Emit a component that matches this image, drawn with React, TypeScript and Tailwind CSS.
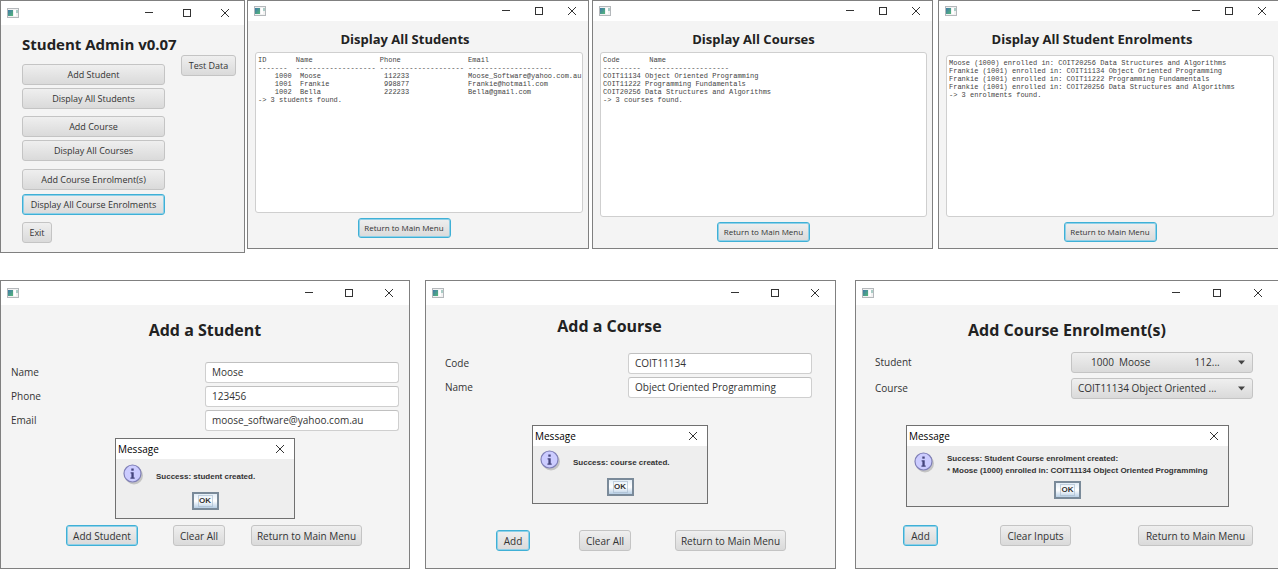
import type { ReactNode } from "react";

const uiFont = "font-['Open_Sans','Noto_Sans',sans-serif]";
const buttonBase =
  "shrink-0 rounded-[3px] border bg-linear-to-b from-[#efefef] to-[#dadada] text-center whitespace-nowrap text-[#333]";
const idle = "border-[#c4c4c4]";
const focused = "border-[#3fb0d6] ring-1 ring-inset ring-[#8fd0e8]";

function AppIcon() {
  return (
    <svg width="12" height="10" viewBox="0 0 12 10" aria-hidden="true">
      <defs>
        <linearGradient id="pane" x1="0" y1="0" x2="1" y2="1">
          <stop offset="0" stopColor="#3f78a8" />
          <stop offset="1" stopColor="#55b878" />
        </linearGradient>
      </defs>
      <rect x="0.5" y="0.5" width="11" height="9" fill="#f2f2f2" stroke="#b4b8bb" />
      <rect x="1" y="2" width="5" height="6" fill="url(#pane)" />
      <rect x="7" y="2" width="2" height="6" fill="#fff" />
      <path d="M10 2v3" stroke="#62a79a" />
    </svg>
  );
}

function CloseGlyph() {
  return (
    <svg width="10" height="10" viewBox="0 0 10 10" fill="none" stroke="#333" aria-hidden="true">
      <path d="M1 1l8 8M9 1l-8 8" />
    </svg>
  );
}

function TitleBar({ bar, control }: { bar: string; control: string }) {
  const item = `flex h-full items-center justify-center ${control}`;
  return (
    <header className={`flex items-center bg-white pl-1.5 ${bar}`}>
      <AppIcon />
      <div className="ml-auto flex h-full">
        <button className={item} aria-label="Minimize">
          <svg width="10" height="10" fill="none" stroke="#333" aria-hidden="true">
            <path d="M1 4.5h8" />
          </svg>
        </button>
        <button className={item} aria-label="Maximize">
          <svg width="10" height="10" fill="none" stroke="#333" aria-hidden="true">
            <rect x="1.5" y="1.5" width="7" height="7" />
          </svg>
        </button>
        <button className={item} aria-label="Close">
          <CloseGlyph />
        </button>
      </div>
    </header>
  );
}

type WindowProps = { frame: string; bar: string; control: string; children: ReactNode };

function AppWindow({ frame, bar, control, children }: WindowProps) {
  return (
    <section className={`relative flex min-w-0 basis-0 flex-col border border-[#808080] bg-[#f4f4f4] ${frame}`}>
      <TitleBar bar={bar} control={control} />
      {children}
    </section>
  );
}

function MenuButton({ label, space = "", active = false }: { label: string; space?: string; active?: boolean }) {
  return (
    <button className={`${buttonBase} h-[21px] w-full text-[9px] leading-4 ${active ? focused : idle} ${space}`}>
      {label}
    </button>
  );
}

type ReportProps = {
  frame: string;
  title: string;
  titleClass: string;
  text: string;
  bodyClass: string;
  areaClass: string;
  footerClass: string;
};

function ReportWindow({ frame, title, titleClass, text, bodyClass, areaClass, footerClass }: ReportProps) {
  return (
    <AppWindow frame={`min-h-[249px] ${frame}`} bar="h-5" control="w-[33px]">
      <div className={`flex flex-1 flex-col pt-2 pl-[7px] ${bodyClass}`}>
        <h2 className={`text-center text-[13px] leading-5 font-bold text-[#222] ${titleClass}`}>{title}</h2>
        <textarea
          readOnly
          wrap="off"
          aria-label={title}
          value={text}
          className={`block w-full resize-none overflow-hidden rounded-[3px] border border-[#cfcfcf] bg-white pt-[3px] pl-0.5 font-['Liberation_Mono',monospace] text-[7px] leading-[8px] text-[#444] outline-none ${areaClass}`}
        />
        <div className={`mt-[5px] flex justify-center ${footerClass}`}>
          <button className={`${buttonBase} ${focused} h-5 w-[93px] text-[8px] leading-4`}>Return to Main Menu</button>
        </div>
      </div>
    </AppWindow>
  );
}

function Field({ id, label, value, width }: { id: string; label: string; value: string; width: string }) {
  return (
    <div className="flex items-center justify-between">
      <label htmlFor={id}>{label}</label>
      <input
        id={id}
        defaultValue={value}
        className={`h-[21px] rounded-[3px] border border-[#cfcfcf] border-t-[#c0c0c0] bg-white px-1.5 pb-0.5 outline-none ${width}`}
      />
    </div>
  );
}

function Choice({ id, label, value }: { id: string; label: string; value: string }) {
  return (
    <div className="flex items-center justify-between">
      <label htmlFor={id}>{label}</label>
      <div className="relative">
        <select
          id={id}
          className="block h-[21px] w-[182px] appearance-none rounded-[3px] border border-[#c4c4c4] bg-linear-to-b from-[#efefef] to-[#dadada] pl-1.5 outline-none"
        >
          <option>{value}</option>
        </select>
        <svg
          className="pointer-events-none absolute top-2 right-2"
          width="7"
          height="5"
          viewBox="0 0 7 5"
          fill="#444"
          aria-hidden="true"
        >
          <path d="M0 0.5h7L3.5 4.5z" />
        </svg>
      </div>
    </div>
  );
}

function ActionButton({ label, size, active = false }: { label: string; size: string; active?: boolean }) {
  return (
    <button className={`${buttonBase} h-[21px] leading-4 ${active ? focused : idle} ${size}`}>
      {label}
    </button>
  );
}

function InfoIcon() {
  return (
    <svg width="21" height="21" viewBox="0 0 21 21" aria-hidden="true">
      <circle cx="11" cy="11.5" r="9" fill="#c4c4c4" />
      <circle cx="9.5" cy="9.5" r="8.5" fill="#ccccff" stroke="#7f7fb6" strokeWidth="1.2" />
      <path d="M8.3 4.5h2.4v2.2H8.3z" fill="#45457c" />
      <path d="M7.6 8.2h3.1v5.3h1v1.2H7.4v-1.2h1V9.4h-.8z" fill="#45457c" />
    </svg>
  );
}

type DialogProps = { place: string; lines: string[]; pad: string; okSpace: string };

function MessageDialog({ place, lines, pad, okSpace }: DialogProps) {
  return (
    <div role="dialog" aria-label="Message" className={`absolute border border-[#707070] bg-[#eee] ${place}`}>
      <header className="flex h-5 items-center justify-between bg-white pr-[7px] pl-0.5 text-black">
        <span>Message</span>
        <button aria-label="Close" className="p-0.5">
          <CloseGlyph />
        </button>
      </header>
      <div className={`flex items-start gap-3 pl-[7px] ${pad}`}>
        <InfoIcon />
        <div className="flex h-[25px] flex-col justify-center font-['Liberation_Sans',Arial,sans-serif] text-[8px] leading-3 font-bold whitespace-nowrap text-[#333]">
          {lines.map((line) => (
            <p key={line}>{line}</p>
          ))}
        </div>
      </div>
      <div className={`flex justify-center ${okSpace}`}>
        <button className="h-[18px] w-[27px] border-2 border-[#7a8a99] bg-linear-to-b from-[#e4eef7] via-white to-[#b8cfe5] px-1 font-['Liberation_Sans',Arial,sans-serif] text-[8px] font-bold text-[#333]">
          <span className="block border border-[#a3b8cc]/60 leading-[10px]">OK</span>
        </button>
      </div>
    </div>
  );
}

const dash = (count: number) => "-".repeat(count);

const studentsText = [
  "ID".padEnd(9) + "Name".padEnd(20) + "Phone".padEnd(21) + "Email",
  `${dash(7)}  ${dash(19)} ${dash(20)} ${dash(20)}`,
  "    1000  " + "Moose".padEnd(20) + "112233".padEnd(20) + "Moose_Software@yahoo.com.au",
  "    1001  " + "Frankie".padEnd(20) + "998877".padEnd(20) + "Frankie@hotmail.com",
  "    1002  " + "Bella".padEnd(20) + "222233".padEnd(20) + "Bella@gmail.com",
  "-> 3 students found.",
].join("\n");

const coursesText = [
  "Code".padEnd(11) + "Name",
  `${dash(9)}  ${dash(19)}`,
  "COIT11134 Object Oriented Programming",
  "COIT11222 Programming Fundamentals",
  "COIT20256 Data Structures and Algorithms",
  "-> 3 courses found.",
].join("\n");

const enrolmentsText = [
  "Moose (1000) enrolled in: COIT20256 Data Structures and Algorithms",
  "Frankie (1001) enrolled in: COIT11134 Object Oriented Programming",
  "Frankie (1001) enrolled in: COIT11222 Programming Fundamentals",
  "Frankie (1001) enrolled in: COIT20256 Data Structures and Algorithms",
  "-> 3 enrolments found.",
].join("\n");

const formTitle = "text-center text-[16px] leading-6 font-bold text-[#222]";

export default function App() {
  return (
    <main className={`min-h-screen bg-white text-[#333] ${uiFont}`}>
      <div className="flex items-start">
        <AppWindow frame="grow-[243] min-h-[253px]" bar="h-6" control="w-[38px]">
          <div className="flex items-start gap-1 pt-[7px] pl-[21px]">
            <div className="w-[155px] shrink-0">
              <h1 className="text-[15px] leading-6 font-bold whitespace-nowrap text-[#222]">Student Admin v0.07</h1>
              <div className="mt-2 flex w-[143px] flex-col items-start">
                <MenuButton label="Add Student" />
                <MenuButton label="Display All Students" space="mt-[3px]" />
                <MenuButton label="Add Course" space="mt-[7px]" />
                <MenuButton label="Display All Courses" space="mt-[3px]" />
                <MenuButton label="Add Course Enrolment(s)" space="mt-2" />
                <MenuButton label="Display All Course Enrolments" space="mt-1" active />
                <button className={`${buttonBase} ${idle} mt-[7px] h-[21px] w-[30px] text-[9px] leading-4`}>
                  Exit
                </button>
              </div>
            </div>
            <button className={`${buttonBase} ${idle} mt-[23px] h-[21px] w-[55px] text-[9px] leading-4`}>
              Test Data
            </button>
          </div>
        </AppWindow>
        <ReportWindow
          frame="ml-0.5 grow-[340]"
          title="Display All Students"
          titleClass="pr-7"
          text={studentsText}
          bodyClass="pr-[5px]"
          areaClass="mt-[3px] h-[161px]"
          footerClass="pr-[30px]"
        />
        <ReportWindow
          frame="ml-[3px] grow-[339]"
          title="Display All Courses"
          titleClass="pr-5"
          text={coursesText}
          bodyClass="pr-[5px]"
          areaClass="mt-[3px] h-[165px]"
          footerClass=""
        />
        <ReportWindow
          frame="ml-[5px] grow-[339] border-r-0"
          title="Display All Student Enrolments"
          titleClass="pr-9"
          text={enrolmentsText}
          bodyClass="pr-1"
          areaClass="mt-1.5 h-[162px]"
          footerClass=""
        />
      </div>

      <div className="mt-[27px] flex items-start text-[10px]">
        <AppWindow frame="grow-[408] min-h-[289px]" bar="h-6" control="w-10">
          <div className="flex flex-1 flex-col pt-[13px] pb-[22px]">
            <h2 className={formTitle}>Add a Student</h2>
            <div className="mt-5 flex flex-col gap-[3px] pr-2.5 pl-2.5">
              <Field id="student-name" label="Name" value="Moose" width="w-[194px]" />
              <Field id="student-phone" label="Phone" value="123456" width="w-[194px]" />
              <Field id="student-email" label="Email" value="moose_software@yahoo.com.au" width="w-[194px]" />
            </div>
            <div className="mt-auto flex pl-[65px]">
              <ActionButton label="Add Student" size="w-[72px]" active />
              <ActionButton label="Clear All" size="ml-[35px] w-[52px]" />
              <ActionButton label="Return to Main Menu" size="ml-[26px] w-[111px]" />
            </div>
          </div>
          <MessageDialog
            place="top-[157px] left-[114px] h-[81px] w-[180px]"
            lines={["Success: student created."]}
            pad="pt-[5px]"
            okSpace="mt-[3px]"
          />
        </AppWindow>

        <AppWindow frame="ml-[15px] grow-[409] min-h-[289px]" bar="h-6" control="w-10">
          <div className="flex flex-1 flex-col pt-[9px] pb-[17px]">
            <h2 className={`${formTitle} pr-[42px]`}>Add a Course</h2>
            <div className="mt-[15px] flex flex-col gap-[3px] pr-[23px] pl-[19px]">
              <Field id="course-code" label="Code" value="COIT11134" width="w-[184px]" />
              <Field id="course-name" label="Name" value="Object Oriented Programming" width="w-[184px]" />
            </div>
            <div className="mt-auto flex pl-[70px]">
              <ActionButton label="Add" size="w-[34px]" active />
              <ActionButton label="Clear All" size="ml-[49px] w-[52px]" />
              <ActionButton label="Return to Main Menu" size="ml-11 w-[111px]" />
            </div>
          </div>
          <MessageDialog
            place="top-[144px] left-[106px] h-[79px] w-[176px]"
            lines={["Success: course created."]}
            pad="pt-1"
            okSpace="mt-[3px]"
          />
        </AppWindow>

        <AppWindow frame="ml-[19px] grow-[422] min-h-[289px] border-r-0" bar="h-6" control="w-[41px]">
          <div className="flex flex-1 flex-col pt-[13px] pb-[22px]">
            <h2 className={formTitle}>Add Course Enrolment(s)</h2>
            <div className="mt-2.5 flex flex-col gap-[5px] pr-[25px] pl-[19px]">
              <Choice
                id="enrol-student"
                label="Student"
                value={"\u00a0".repeat(5) + "1000\u00a0\u00a0Moose" + "\u00a0".repeat(17) + "112..."}
              />
              <Choice id="enrol-course" label="Course" value="COIT11134 Object Oriented ..." />
            </div>
            <div className="mt-auto flex pl-[47px]">
              <ActionButton label="Add" size="w-[35px]" active />
              <ActionButton label="Clear Inputs" size="ml-[62px] w-[71px]" />
              <ActionButton label="Return to Main Menu" size="ml-[67px] w-[115px]" />
            </div>
          </div>
          <MessageDialog
            place="top-[144px] left-[50px] h-[82px] w-[323px]"
            lines={[
              "Success: Student Course enrolment created:",
              "* Moose (1000) enrolled in: COIT11134 Object Oriented Programming",
            ]}
            pad="pt-1.5"
            okSpace="mt-1"
          />
        </AppWindow>
      </div>
    </main>
  );
}
